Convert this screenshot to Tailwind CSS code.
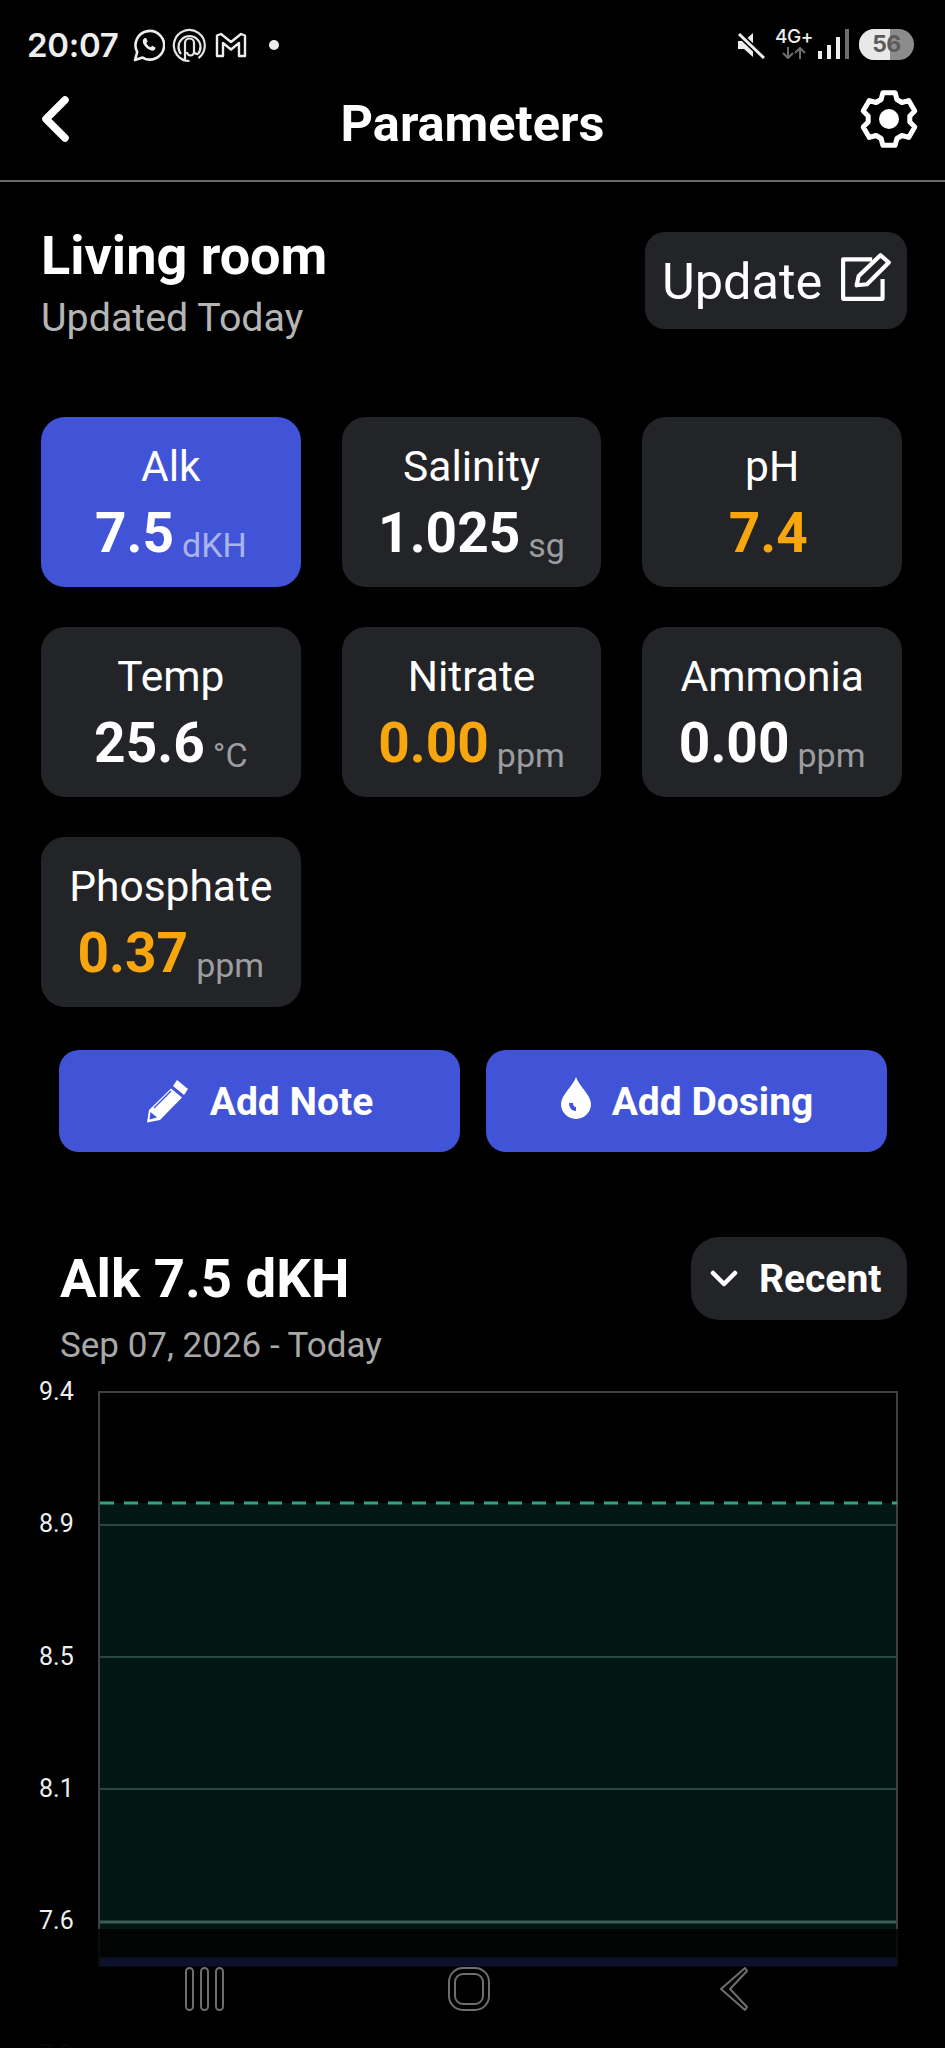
<!DOCTYPE html>
<html lang="en">
<head>
  <meta charset="UTF-8" />
  <title>Parameters</title>
  <script src="https://cdn.jsdelivr.net/npm/@tailwindcss/browser@4"></script>
</head>
<body class="bg-black">
<div class="relative w-[945px] h-[2048px] overflow-hidden bg-black text-white font-[Roboto]">

  <!-- Status bar -->
  <div class="h-[88px] pt-[28px] pl-[27px] pr-[31px] flex items-start justify-between">
    <div class="flex items-center h-[34px]">
      <span class="font-[Inter] font-semibold text-[33px] leading-none text-[#eeeeee] tracking-[-0.3px]">20:07</span>
      <svg class="ml-[14px]" width="32" height="33" viewBox="0 0 32 33" fill="none" stroke="#eeeeee" stroke-width="2.6"><path d="M2 31l2.2-8A14.3 14.3 0 1 1 9.6 28.6z" stroke-linejoin="round"/><path d="M11 9.500c-2 1.600-1.500 5 1.500 8.300 3 3.300 6.500 4.700 8.600 3.400 1.300-.9 1.500-2 1.300-2.700l-3.200-1.700-1.500 1.500c-1.500-.4-3.900-2.800-4.400-4.400l1.400-1.500-1.500-3.300c-.7-.1-1.500.1-2.200.4z" fill="#eeeeee" stroke="none"/></svg>
      <svg class="ml-[7px]" width="35" height="35" viewBox="0 0 35 35" fill="none" stroke="#e6e6e6" stroke-width="2.2"><path d="M17.500 33a15.500 15.500 0 1 1 9-3"/><path d="M26 26a11 11 0 1 0-17 0"/><path d="M13 33V15a4.500 4.500 0 0 1 9 0v9a3.500 3.500 0 0 1-7 0"/><path d="M22 24a4 4 0 0 0 4 2"/></svg>
      <svg class="ml-[8px]" width="32" height="26" viewBox="0 0 32 26" fill="none" stroke="#eeeeee" stroke-width="2.400" stroke-linejoin="round"><path d="M2 3.500L6 2l10 8 10-8 4 1.500V24h-6V11l-8 6.500L8 11v13H2z"/></svg>
      <span class="ml-[22px] w-[10px] h-[10px] rounded-full bg-[#eeeeee]"></span>
    </div>
    <div class="flex items-start pt-[1px]">
      <svg class="mt-[2px]" width="29" height="28" viewBox="0 0 29 28"><path d="M1 10h6l9-8v24l-9-8H1z" fill="#eeeeee"/><path d="M1 2l26 25" stroke="#000000" stroke-width="6"/><path d="M2 3l25 24" stroke="#eeeeee" stroke-width="3"/></svg>
      <div class="ml-[9px] w-[38px] flex flex-col items-center">
        <span class="font-[Inter] font-medium text-[19px] leading-[15px] text-[#eeeeee] tracking-[-0.5px]">4G+</span>
        <svg class="mt-[3px]" width="26" height="12" viewBox="0 0 26 12" fill="none" stroke="#6e6e6e" stroke-width="2"><path d="M7 0v11M2 6l5 5 5-5M19 12V1M14 6l5-5 5 5"/></svg>
      </div>
      <div class="ml-[5px] h-[30px] flex items-end gap-[5px]">
        <span class="w-[4px] h-[8px] bg-[#eeeeee]"></span>
        <span class="w-[4px] h-[14px] bg-[#eeeeee]"></span>
        <span class="w-[4px] h-[22px] bg-[#eeeeee]"></span>
        <span class="w-[4px] h-[30px] bg-[#6e6e6e]"></span>
      </div>
      <div class="relative ml-[10px] w-[55px] h-[31px] rounded-full overflow-hidden flex bg-[#8c8c8c]">
        <span class="w-[31px] h-full bg-[#e8e8e8]"></span>
        <span class="absolute inset-0 flex items-center justify-center font-[Inter] font-bold text-[23px] text-[#5b5b5b] tracking-[-0.5px]">56</span>
      </div>
    </div>
  </div>

  <!-- Header -->
  <div class="relative h-[94px] border-b-2 border-[#6a6a6a] flex items-center justify-center">
    <svg class="absolute left-[39px] top-[7px]" width="32" height="48" viewBox="0 0 32 48" fill="none" stroke="#ffffff" stroke-width="7.500" stroke-linecap="round" stroke-linejoin="round"><path d="M26 5L7 24l19 19"/></svg>
    <span class="font-bold text-[50.500px] leading-none mb-[20px]">Parameters</span>
    <svg class="absolute left-[859px] top-[1px]" width="60" height="60" viewBox="0 0 60 60"><path d="M22.100 10.500L23.900 3.700H36.100L37.900 10.500L42.900 13.500L49.700 11.600L55.800 22.100L50.800 27.100V32.900L55.800 37.900L49.700 48.400L42.900 46.500L37.900 49.500L36.100 56.300H23.900L22.100 49.500L17.100 46.500L10.300 48.400L4.200 37.900L9.200 32.900V27.100L4.200 22.100L10.300 11.600L17.100 13.500Z" fill="none" stroke="#ffffff" stroke-width="5" stroke-linejoin="round"/><circle cx="30" cy="30" r="10" fill="#ffffff"/></svg>
  </div>

  <!-- Tank title -->
  <div class="pl-[41px] pr-[38px] pt-[50px] flex justify-between items-start">
    <div>
      <div class="font-bold text-[54px] leading-[60px] -mt-[6px]">Living room</div>
      <div class="text-[39.400px] leading-[44px] text-[#b5b5b5] mt-[10px]">Updated Today</div>
    </div>
    <div class="w-[262px] h-[97px] rounded-[20px] bg-[#232428] flex items-center pl-[17px]">
      <span class="text-[50.500px] leading-none mt-[4px]">Update</span>
      <svg class="ml-[18px] -mt-[8px]" width="54" height="50" viewBox="0 0 52 48" fill="none" stroke="#ffffff" stroke-width="4" stroke-linejoin="round"><path d="M31 7H3v38h38V26"/><path d="M16 32l2-9L39 3l8 7-21 21z"/></svg>
    </div>
  </div>

  <!-- Parameter cards -->
  <div class="mt-[77px] ml-[41px] w-[861px] grid grid-cols-3 gap-x-[41px] gap-y-[40px]">
    <div class="h-[170px] rounded-[24px] bg-[#4154d7] flex flex-col items-center pt-[27px]">
      <div class="text-[42.500px] leading-[46px]">Alk</div>
      <div class="flex items-baseline mt-[13px]"><span class="font-bold text-[55px] leading-[60px]">7.5</span><span class="ml-[8px] text-[34px] leading-none text-[#a9b3ec] translate-y-[5px]">dKH</span></div>
    </div>
    <div class="h-[170px] rounded-[24px] bg-[#232428] flex flex-col items-center pt-[27px]">
      <div class="text-[42.500px] leading-[46px]">Salinity</div>
      <div class="flex items-baseline mt-[13px]"><span class="font-bold text-[55px] leading-[60px]">1.025</span><span class="ml-[8px] text-[34px] leading-none text-[#9b9da1] translate-y-[5px]">sg</span></div>
    </div>
    <div class="h-[170px] rounded-[24px] bg-[#232428] flex flex-col items-center pt-[27px]">
      <div class="text-[42.500px] leading-[46px]">pH</div>
      <div class="flex items-baseline mt-[13px]"><span class="font-bold text-[55px] leading-[60px] text-[#f7a60e]">7.4</span><span class="ml-[8px]"></span></div>
    </div>
    <div class="h-[170px] rounded-[24px] bg-[#232428] flex flex-col items-center pt-[27px]">
      <div class="text-[42.500px] leading-[46px]">Temp</div>
      <div class="flex items-baseline mt-[13px]"><span class="font-bold text-[55px] leading-[60px]">25.6</span><span class="ml-[8px] text-[34px] leading-none text-[#9b9da1] translate-y-[5px]">°C</span></div>
    </div>
    <div class="h-[170px] rounded-[24px] bg-[#232428] flex flex-col items-center pt-[27px]">
      <div class="text-[42.500px] leading-[46px]">Nitrate</div>
      <div class="flex items-baseline mt-[13px]"><span class="font-bold text-[55px] leading-[60px] text-[#f7a60e]">0.00</span><span class="ml-[8px] text-[34px] leading-none text-[#9b9da1] translate-y-[5px]">ppm</span></div>
    </div>
    <div class="h-[170px] rounded-[24px] bg-[#232428] flex flex-col items-center pt-[27px]">
      <div class="text-[42.500px] leading-[46px]">Ammonia</div>
      <div class="flex items-baseline mt-[13px]"><span class="font-bold text-[55px] leading-[60px]">0.00</span><span class="ml-[8px] text-[34px] leading-none text-[#9b9da1] translate-y-[5px]">ppm</span></div>
    </div>
    <div class="h-[170px] rounded-[24px] bg-[#232428] flex flex-col items-center pt-[27px]">
      <div class="text-[42.500px] leading-[46px]">Phosphate</div>
      <div class="flex items-baseline mt-[13px]"><span class="font-bold text-[55px] leading-[60px] text-[#f7a60e]">0.37</span><span class="ml-[8px] text-[34px] leading-none text-[#9b9da1] translate-y-[5px]">ppm</span></div>
    </div>
  </div>

  <!-- Actions -->
  <div class="mt-[43px] ml-[59px] flex gap-[26px]">
    <div class="w-[401px] h-[102px] rounded-[20px] bg-[#4154d7] flex items-center justify-center">
      <svg width="44" height="44" viewBox="0 0 44 44" fill="#ffffff"><path d="M31 1l11 9-4 6-11-9z"/><path d="M25 9.500l11 9L14 41 1 43.500 3 31z"/><path d="M4.500 33l6.500 5.500-7.500 2z" fill="#4154d7"/><path d="M8 29L25 12" stroke="#4154d7" stroke-width="1.500"/></svg>
      <span class="ml-[20px] font-bold text-[39px] leading-none mt-[3px]">Add Note</span>
    </div>
    <div class="w-[401px] h-[102px] rounded-[20px] bg-[#4154d7] flex items-center justify-center">
      <svg class="-mt-[6px]" width="32" height="42" viewBox="0 0 32 42" fill="#ffffff"><path d="M16 0C19 9 31 18 31 27a15 15 0 0 1-30 0C1 18 13 9 16 0z"/><path d="M9 26c0 5 3 8 7 8v-4c-2 0-3-2-3-4z" fill="#4154d7"/></svg>
      <span class="ml-[20px] font-bold text-[39px] leading-none mt-[3px]">Add Dosing</span>
    </div>
  </div>

  <!-- Chart header -->
  <div class="mt-[85px] pl-[60px] pr-[38px] flex justify-between items-start">
    <div>
      <div class="font-bold text-[54.500px] leading-[62px] mt-[10px]">Alk 7.5 dKH</div>
      <div class="text-[35px] leading-[42px] text-[#a8a8a8] mt-[16px]">Sep 07, 2026 - Today</div>
    </div>
    <div class="w-[216px] h-[83px] rounded-[28px] bg-[#232428] flex items-center pl-[19px]">
      <svg width="28" height="17" viewBox="0 0 28 17" fill="none" stroke="#ffffff" stroke-width="4.500" stroke-linecap="round" stroke-linejoin="round"><path d="M3 3l11 11L25 3"/></svg>
      <span class="ml-[21px] font-bold text-[39px] leading-none mt-[2px]">Recent</span>
    </div>
  </div>

  <!-- Chart, plotted on its own canvas -->
  <svg class="absolute left-0 top-[1370px]" width="945" height="678" viewBox="0 1370 945 678">
    <rect x="100" y="1503" width="797" height="455" fill="#03241d" opacity="0.65"/>
    <path d="M100 1525H897M100 1657H897M100 1789H897" stroke="#2b4640" stroke-width="2"/>
    <path d="M100 1922H897" stroke="#3d5d55" stroke-width="3"/>
    <rect x="99" y="1392" width="798" height="700" fill="none" stroke="#3f3f3f" stroke-width="2"/>
    <path d="M100 1503H897" stroke="#2fa584" stroke-width="3" stroke-dasharray="14 10"/>
    <path d="M100 1962H897" stroke="#4154d7" stroke-width="9"/>
    <g class="font-[Roboto] fill-[#eeeeee] text-[25px]">
      <text x="39" y="1400">9.4</text>
      <text x="39" y="1532">8.9</text>
      <text x="39" y="1665">8.5</text>
      <text x="39" y="1797">8.1</text>
      <text x="39" y="1929">7.6</text>
      <text x="39" y="2063">7.2</text>
    </g>
  </svg>

  <!-- Navigation bar over the chart -->
  <div class="absolute left-0 bottom-0 w-full h-[119px] bg-black/80">
    <div class="absolute left-0 right-0 top-[38px] h-[81px] bg-black/85"></div>
    <svg class="absolute left-[184px] top-[37px]" width="42" height="46" viewBox="0 0 42 46" fill="none" stroke="#6e6e6e" stroke-width="2"><rect x="2" y="2" width="7" height="42" rx="3.500"/><rect x="17" y="2" width="7" height="42" rx="3.500"/><rect x="32" y="2" width="7" height="42" rx="3.500"/></svg>
    <svg class="absolute left-[447px] top-[37px]" width="44" height="46" viewBox="0 0 44 46" fill="none" stroke="#6e6e6e" stroke-width="2"><rect x="2" y="2" width="40" height="42" rx="14"/><rect x="8" y="8" width="28" height="30" rx="8"/></svg>
    <svg class="absolute left-[719px] top-[37px]" width="30" height="46" viewBox="0 0 30 46" fill="none" stroke="#6e6e6e" stroke-width="2" stroke-linejoin="round"><path d="M26 2l2 3L11 23l17 18-2 3L2 23z"/></svg>
  </div>
</div>
</body>
</html>
